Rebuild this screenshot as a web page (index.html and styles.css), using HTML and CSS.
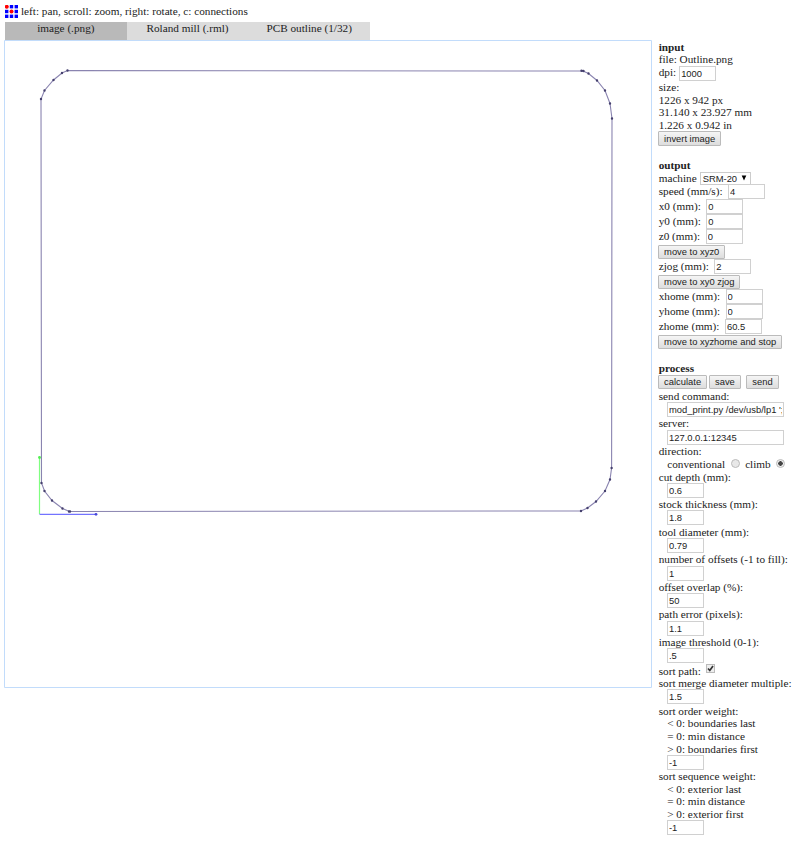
FILE: index.html
```html
<!DOCTYPE html>
<html lang="en">
<head>
<meta charset="utf-8">
<title>fab modules</title>
<link rel="stylesheet" href="styles.css">
</head>
<body>
<header class="top">
<svg class="logo" width="13" height="13" viewBox="0 0 13 13"><g fill="#0000ff"><rect x="4.8" width="3.4" height="3.4"/><rect x="9.6" width="3.4" height="3.4"/><rect y="4.8" width="3.4" height="3.4"/><rect x="9.6" y="4.8" width="3.4" height="3.4"/><rect y="9.6" width="3.4" height="3.4"/><rect x="4.8" y="9.6" width="3.4" height="3.4"/><rect x="9.6" y="9.6" width="3.4" height="3.4"/></g><g fill="#ff0000"><circle cx="1.8" cy="1.8" r="2"/><circle cx="6.5" cy="6.5" r="2"/></g></svg>
<span>left: pan, scroll: zoom, right: rotate, c: connections</span>
</header>
<nav class="tabs"><div class="tab active">image (.png)</div><div class="tab">Roland mill (.rml)</div><div class="tab">PCB outline (1/32)</div></nav>
<main class="main">
<svg class="view" width="648" height="648" viewBox="4 40 648 648">
<path d="M4.5 40.5H651.5V687.5H4.5Z" fill="none" stroke="#c2dcfb"/>
<path d="M39.5 514V457" stroke="#80ff80" stroke-width="1.2" fill="none"/><circle cx="39.5" cy="457.5" r="1.4" fill="#50f050"/>
<path d="M39.5 514.4H96" stroke="#7373ff" stroke-width="1.2" fill="none"/><circle cx="96" cy="514.3" r="1.4" fill="#4848d8"/>
<path class="cut" d="M67.5 70.5L583 71L588.5 73.5L597 80.5L605 90.5L610 103.5L612 118.5L611.6 468L610 479.5L605 491L596 501.5L587.5 508L581 511L69.5 511.5L62.5 508.5L52 500.5L44.5 491L41.5 483L41 99L44.5 90.5L53.5 80L62 73Z"/>
<path class="nodes" d="M67.5 70.5h0M581.5 70.8h0M583.5 71h0M588.5 73.5h0M597 80.5h0M605 90.5h0M610 103.5h0M612 118.5h0M611.6 468h0M610 479.5h0M605 491h0M596 501.5h0M587.5 508h0M581 511h0M69 511.5h0M70 511.5h0M62.5 508.5h0M52 500.5h0M44.5 491h0M41.5 483h0M41 99h0M44.5 90.5h0M53.5 80h0M62 73h0"/>
</svg>
<form class="panel">
<div class="row"><b>input</b></div>
<div class="row">file: Outline.png</div>
<div class="row field">dpi: <input class="num near" value="1000"></div>
<div class="row">size:</div>
<div class="row">1226 x 942 px</div>
<div class="row">31.140 x 23.927 mm</div>
<div class="row">1.226 x 0.942 in</div>
<div class="row field"><button type="button">invert image</button></div>
<div class="row"></div>
<div class="row"><b>output</b></div>
<div class="row mid">machine <span class="select">SRM-20<svg width="6" height="6" viewBox="0 0 6 6"><path d="M.7 .5h4.600L3 5.500z"/></svg></span></div>
<div class="row field">speed (mm/s): <input class="num after" value="4"></div>
<div class="row field">x0 (mm): <input class="num after" value="0"></div>
<div class="row field">y0 (mm): <input class="num after" value="0"></div>
<div class="row field">z0 (mm): <input class="num after" value="0"></div>
<div class="row field"><button type="button">move to xyz0</button></div>
<div class="row field">zjog (mm): <input class="num after" value="2"></div>
<div class="row field"><button type="button">move to xy0 zjog</button></div>
<div class="row field">xhome (mm): <input class="num after" value="0"></div>
<div class="row field">yhome (mm): <input class="num after" value="0"></div>
<div class="row field">zhome (mm): <input class="num after" value="60.5"></div>
<div class="row field"><button type="button">move to xyzhome and stop</button></div>
<div class="row"></div>
<div class="row"><b>process</b></div>
<div class="row field buttons"><button type="button">calculate</button><button type="button">save</button><button type="button" class="send">send</button></div>
<div class="row">send command:</div>
<div class="row field"><input class="wide" value="mod_print.py /dev/usb/lp1 ';"></div>
<div class="row">server:</div>
<div class="row field"><input class="wide" value="127.0.0.1:12345"></div>
<div class="row">direction:</div>
<div class="row mid indent">conventional <i class="radio"></i> climb <i class="radio on"></i></div>
<div class="row">cut depth (mm):</div>
<div class="row field"><input class="num" value="0.6"></div>
<div class="row">stock thickness (mm):</div>
<div class="row field"><input class="num" value="1.8"></div>
<div class="row">tool diameter (mm):</div>
<div class="row field"><input class="num" value="0.79"></div>
<div class="row">number of offsets (-1 to fill):</div>
<div class="row field"><input class="num" value="1"></div>
<div class="row">offset overlap (%):</div>
<div class="row field"><input class="num" value="50"></div>
<div class="row">path error (pixels):</div>
<div class="row field"><input class="num" value="1.1"></div>
<div class="row">image threshold (0-1):</div>
<div class="row field"><input class="num" value=".5"></div>
<div class="row sort">sort path: <i class="check"><svg width="7" height="7" viewBox="0 0 7 7"><path d="M1 3.500L2.800 5.500L6 1" fill="none" stroke="#333" stroke-width="1.7"/></svg></i></div>
<div class="row">sort merge diameter multiple:</div>
<div class="row field"><input class="num" value="1.5"></div>
<div class="row">sort order weight:</div>
<div class="row indent">&lt; 0: boundaries last</div>
<div class="row indent">= 0: min distance</div>
<div class="row indent">&gt; 0: boundaries first</div>
<div class="row field"><input class="num" value="-1"></div>
<div class="row">sort sequence weight:</div>
<div class="row indent">&lt; 0: exterior last</div>
<div class="row indent">= 0: min distance</div>
<div class="row indent">&gt; 0: exterior first</div>
<div class="row field"><input class="num" value="-1"></div>
</form>
</main>
</body>
</html>
```
FILE: styles.css
```css
* { box-sizing: border-box; }
body { margin: 0; padding: 5px 0 0 5px; width: 800px; height: 844px; overflow: hidden; background: #fff; color: #222; font: 11.22px/12.6px "Liberation Serif", serif; }
.top { display: flex; height: 17px; gap: 3px; white-space: nowrap; }
.logo { flex: none; }
.tabs { display: flex; height: 18px; width: 365px; background: #dcdcdc; }
.tab { width: 122px; text-align: center; line-height: 13px; }
.active { background: #b9b9b9; }
.main { display: flex; margin-left: -1px; }
.view { flex: none; display: block; }
.cut { fill: none; stroke: #8a84b0; stroke-width: 1.1; }
.nodes { fill: none; stroke: #45406e; stroke-width: 2.4; stroke-linecap: round; }
.panel { padding: 0.8px 0 0 6.7px; width: 148px; }
.row { display: flex; height: 12.6px; white-space: nowrap; line-height: 12.6px; }
.field { height: 15px; line-height: 13.4px; }
.mid { height: 13px; }
.sort { height: 13.6px; line-height: 14px; }
.indent { padding-left: 8.5px; }
input { margin: -0.4px 0 0 8.3px; padding: 0 1px; height: 15px; border: 1px solid #d0d0d0; background: #fff; color: #222; font: 9.4px "Liberation Sans", sans-serif; border-radius: 0; }
.num { width: 37px; }
.num.after { margin-left: 5.5px; }
.num.near { margin-left: 3px; }
.wide { width: 117px; }
button { margin: 0 0 0 -0.6px; padding: 0 5px; height: 14.6px; border: 1px solid #bbb; border-radius: 1px; background: linear-gradient(#f5f5f5, #ddd); color: #222; font: 9.4px/12px "Liberation Sans", sans-serif; white-space: nowrap; }
.buttons { gap: 2.5px; }
.send { margin-left: 3px; }
.select { display: flex; align-items: center; gap: 4px; margin-left: 3px; width: 51px; height: 13px; padding-left: 2px; border: 1px solid #ccc; font: 9.4px "Liberation Sans", sans-serif; }
.radio { width: 9px; height: 9px; margin: 1px 5px 0 6px; border: 1px solid #bbb; border-radius: 50%; background: #e8e8e8; }
.radio.on { margin-left: 5px; background: radial-gradient(circle, #444 0 2px, #eee 2.5px); }
.check { display: flex; width: 9px; height: 9px; margin: 0 0 0 5px; border: 1px solid #bbb; background: #eee; }
```
